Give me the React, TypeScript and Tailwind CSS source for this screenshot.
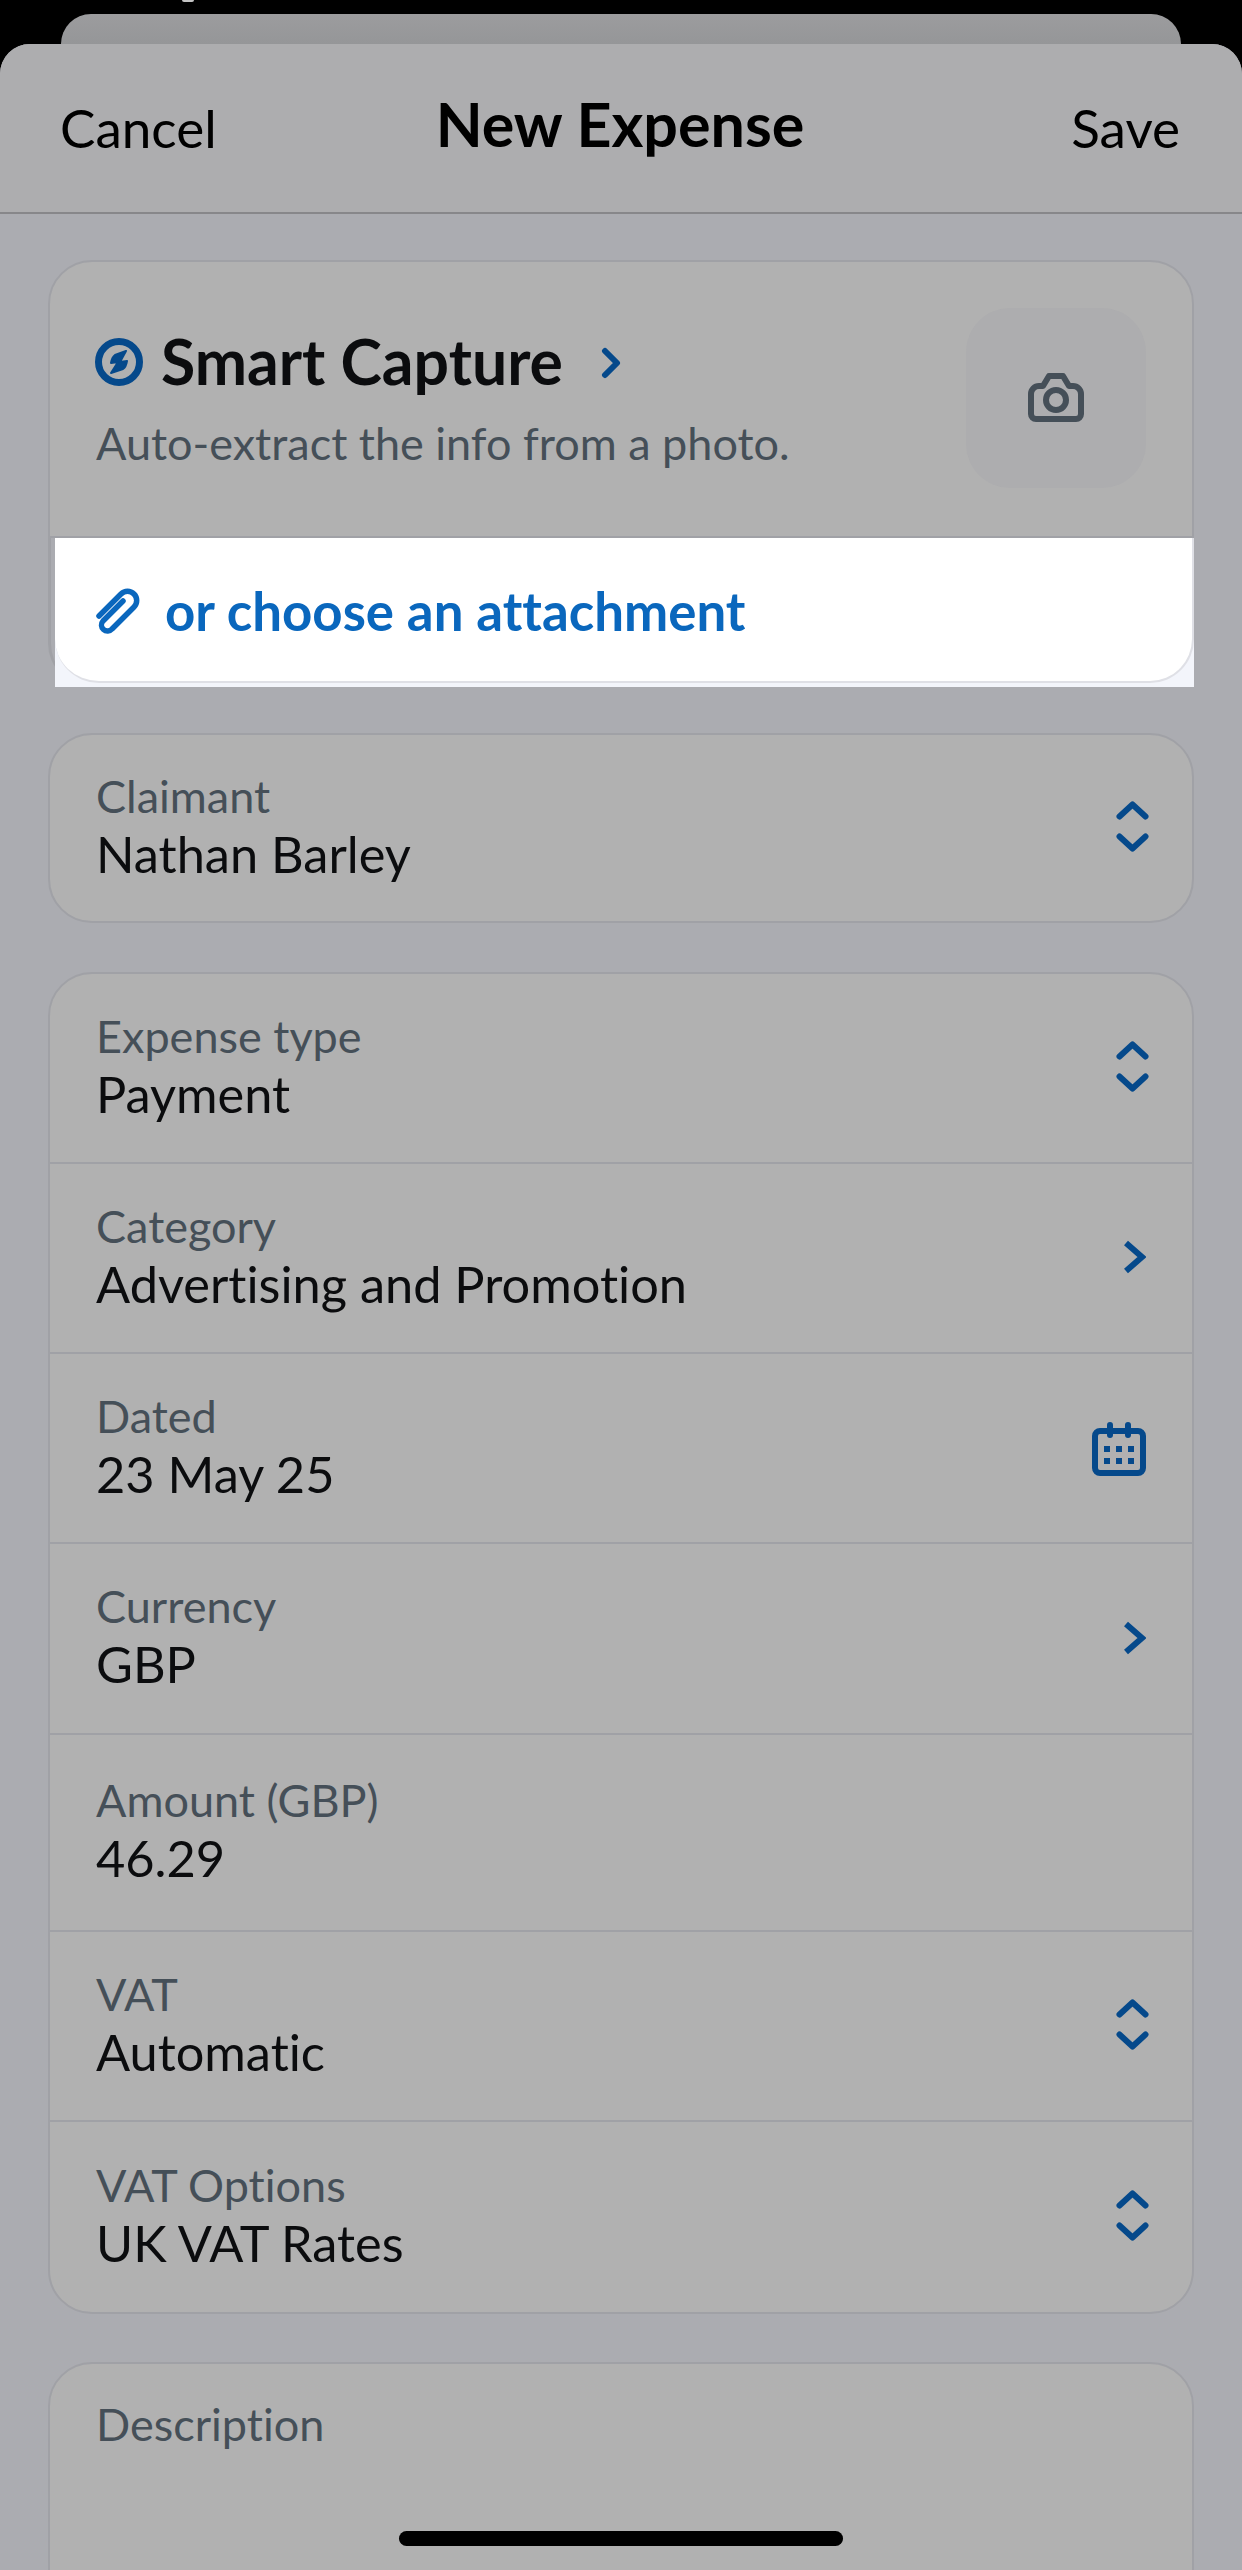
import React from 'react';

const Stepper = () => (
  <svg className="mb-[3px]" width="33" height="51" viewBox="0 0 33 51" fill="none" stroke="#05498b" strokeWidth="6" strokeLinecap="round" strokeLinejoin="round">
    <path d="M3.5 15.5 16.5 3.5 29.5 15.5" />
    <path d="M3.5 35.5 16.5 47.5 29.5 35.5" />
  </svg>
);

const ChevronRight = () => (
  <svg className="mb-[2px] mr-[3px]" width="22" height="34" viewBox="0 0 22 34" fill="none" stroke="#05498b" strokeWidth="6" strokeLinejoin="miter">
    <path d="M2 3 18 17 2 31" />
  </svg>
);

const CalendarIcon = () => (
  <svg className="mr-[3px] mt-[2px]" width="54" height="54" viewBox="0 0 54 54" fill="#05498b">
    <rect x="3" y="9" width="48" height="42" rx="5" fill="none" stroke="#05498b" strokeWidth="6" />
    <path d="M15 3a3 3 0 0 1 6 0v10a3 3 0 0 1-6 0zM33 3a3 3 0 0 1 6 0v10a3 3 0 0 1-6 0z" />
    <path d="M12 24h6v6h-6zM24 24h6v6h-6zM36 24h6v6h-6zM12 36h6v6h-6zM24 36h6v6h-6zM36 36h6v6h-6z" />
  </svg>
);

type FieldProps = {
  label: string;
  value: string;
  icon?: React.ReactNode;
  className: string;
};

function Field({ label, value, icon, className }: FieldProps) {
  return (
    <div className={`flex shrink-0 items-center justify-between pl-[46px] pr-[43px] ${className}`}>
      <div className="mb-[5px] flex flex-col">
        <span className="text-[45px] leading-[56px] text-[#454f58]">{label}</span>
        <span className="text-[50.5px] leading-[60px] text-[#0b0c0e]">{value}</span>
      </div>
      {icon}
    </div>
  );
}

export default function App() {
  return (
    <div className="relative flex h-[2570px] w-[1242px] flex-col overflow-hidden bg-black font-[family-name:Lato,sans-serif] [font-variant-ligatures:none]">
      <div className="h-[14px] shrink-0">
        <div className="ml-[182px] h-[2px] w-[12px] rounded-b-full bg-[#c4c4c4]" />
      </div>
      <div className="mx-[61px] h-[30px] shrink-0 rounded-t-[30px] bg-gradient-to-b from-[#9c9c9e] to-[#959698]" />

      <div className="flex min-h-0 flex-1 flex-col overflow-hidden rounded-t-[30px] bg-[#abacb1]">
        <header className="grid h-[170px] shrink-0 grid-cols-[1fr_auto_1fr] items-center border-b-2 border-[#87878a] bg-[#adadaf] pl-[60px] pr-[62px]">
          <span className="mb-[2px] text-[53px] leading-none text-black">Cancel</span>
          <span className="mb-[10px] text-[61px] font-bold leading-none text-black">New Expense</span>
          <span className="mb-[2px] justify-self-end text-[53px] leading-none text-black">Save</span>
        </header>

        <div className="flex shrink-0 flex-col px-[48px] pt-[46px]">
          {/* Smart capture card */}
          <div className="flex h-[278px] shrink-0 justify-between rounded-t-[44px] border-2 border-[#a0a1a6] bg-[#b1b1b1] pl-[46px] pr-[46px] pt-[46px]">
            <div className="flex flex-col pt-[18px]">
              <div className="flex items-center">
                <svg className="-ml-[2px] mt-[2px]" width="50" height="50" viewBox="0 0 50 50" fill="#05498b">
                  <circle cx="25" cy="25" r="20.5" fill="none" stroke="#05498b" strokeWidth="7" />
                  <path d="M32 14 21 18Q18 20 17 26L24 25 17 36 29 32Q32 30 33 24L26 25Z" stroke="#05498b" strokeWidth="2" strokeLinejoin="round" />
                </svg>
                <span className="ml-[17px] text-[62.5px] font-bold leading-[70px] text-[#0b0c0e]">Smart Capture</span>
                <svg className="ml-[38px] mt-[4px]" width="20" height="32" viewBox="0 0 20 32" fill="none" stroke="#05498b" strokeWidth="6" strokeLinecap="round" strokeLinejoin="round">
                  <path d="M4 4 16 16 4 28" />
                </svg>
              </div>
              <span className="mt-[19px] text-[45px] leading-[56px] text-[#454f58]">Auto-extract the info from a photo.</span>
            </div>
            <div className="flex h-[180px] w-[180px] items-center justify-center rounded-[44px] bg-[#adadaf]">
              <svg width="56" height="50" viewBox="0 0 56 50" fill="none" stroke="#454f58" strokeWidth="6" strokeLinejoin="round">
                <path d="M3 21a8 8 0 0 1 8-8h4l6-10h14l6 10h4a8 8 0 0 1 8 8v20a5 5 0 0 1-5 5H8a5 5 0 0 1-5-5z" />
                <circle cx="28" cy="27" r="10" />
              </svg>
            </div>
          </div>

          <div className="shrink-0 rounded-bl-[44px] border-l-[3px] border-[#a0a1a6] pl-[4px]">
            <div className="h-[149px] bg-[#f3f5fb]">
              <div className="flex h-[145px] items-center rounded-b-[44px] border-b-2 border-r-2 border-[#dfe0e6] bg-white pl-[40px]">
                <svg className="mt-[2px]" width="46" height="46" viewBox="0 0 46 46" fill="none" stroke="#0a67bd" strokeWidth="5.5" strokeLinecap="round" strokeLinejoin="round">
                  <path d="M4 28 26 6a9 9 0 0 1 13 13L17 41a6 6 0 0 1-9-8L28 13" />
                </svg>
                <span className="ml-[24px] mt-[4px] text-[52.8px] font-bold leading-none text-[#0a67bd]">or choose an attachment</span>
              </div>
            </div>
          </div>

          {/* Claimant */}
          <div className="mt-[46px] shrink-0 rounded-[44px] border-2 border-[#a0a1a6] bg-[#b1b1b1]">
            <Field className="h-[186px]" label="Claimant" value="Nathan Barley" icon={<Stepper />} />
          </div>

          {/* Expense details */}
          <div className="mt-[49px] flex shrink-0 flex-col rounded-[44px] border-2 border-[#a0a1a6] bg-[#b1b1b1]">
            <Field className="h-[190px] border-b-2 border-[#a0a1a6]" label="Expense type" value="Payment" icon={<Stepper />} />
            <Field className="h-[190px] border-b-2 border-[#a0a1a6]" label="Category" value="Advertising and Promotion" icon={<ChevronRight />} />
            <Field className="h-[190px] border-b-2 border-[#a0a1a6]" label="Dated" value="23 May 25" icon={<CalendarIcon />} />
            <Field className="h-[191px] border-b-2 border-[#a0a1a6]" label="Currency" value="GBP" icon={<ChevronRight />} />
            <Field className="h-[197px] border-b-2 border-[#a0a1a6]" label="Amount (GBP)" value="46.29" />
            <Field className="h-[190px] border-b-2 border-[#a0a1a6]" label="VAT" value="Automatic" icon={<Stepper />} />
            <Field className="h-[190px]" label="VAT Options" value="UK VAT Rates" icon={<Stepper />} />
          </div>

          {/* Description */}
          <div className="mt-[48px] h-[400px] shrink-0 rounded-[44px] border-2 border-[#a0a1a6] bg-[#b1b1b1] pl-[46px] pt-[32px]">
            <span className="text-[45px] leading-[56px] text-[#454f58]">Description</span>
          </div>
        </div>
      </div>

      <div className="absolute bottom-[24px] left-[399px] h-[15px] w-[444px] rounded-full bg-black" />
    </div>
  );
}
